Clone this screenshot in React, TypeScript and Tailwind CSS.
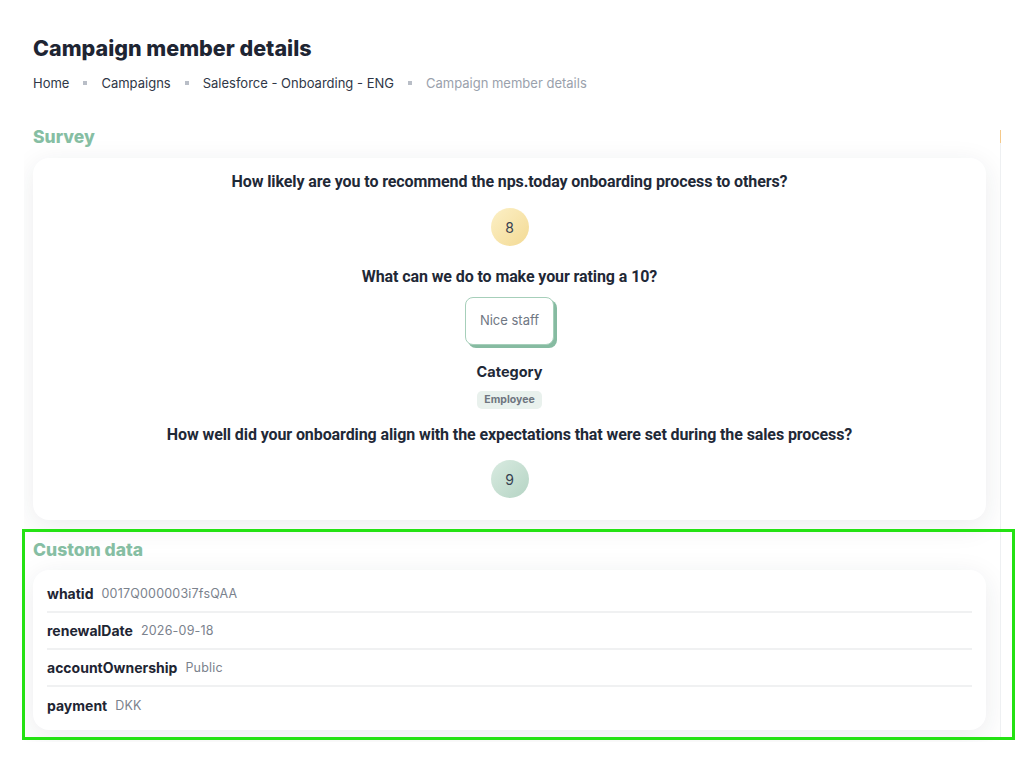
import React from 'react';

const customData = [
  { key: 'whatid', value: '0017Q000003i7fsQAA' },
  { key: 'renewalDate', value: '2026-09-18' },
  { key: 'accountOwnership', value: 'Public' },
  { key: 'payment', value: 'DKK' },
];

const crumbs = ['Home', 'Campaigns', 'Salesforce - Onboarding - ENG'];

const Question: React.FC<{ children: React.ReactNode; className?: string }> = ({ children, className }) => (
  <h3
    className={`text-[16px] leading-[22px] font-bold text-[#1f2937] tracking-[-0.1px] ${className ?? ''}`}
    style={{ fontFamily: 'Roboto, sans-serif' }}
  >
    {children}
  </h3>
);

const App: React.FC = () => {
  return (
    <div className="relative min-h-[762px] bg-white" style={{ fontFamily: 'Inter, "Open Sans", sans-serif' }}>
      {/* Page header */}
      <div className="pl-[33px] pt-[34px]">
        <h1 className="text-[21.5px] leading-[28px] font-extrabold text-[#1e2533]">Campaign member details</h1>
        <nav className="mt-[11px] flex items-center text-[13px] leading-[20px] text-[#2f3747]">
          {crumbs.map((c) => (
            <React.Fragment key={c}>
              <span>{c}</span>
              <span className="mx-[14px] h-[4px] w-[4px] bg-[#b9bec7]" />
            </React.Fragment>
          ))}
          <span className="text-[#9aa1ac]">Campaign member details</span>
        </nav>
      </div>

      {/* Content panel */}
      <div className="relative mt-[32px] ml-[24px] w-[976px] overflow-hidden px-[9px] pb-[12px]">
        <h2 className="text-[17.5px] leading-[24px] font-extrabold text-[#86bea3]">Survey</h2>
        <div className="mt-[9px] w-[953px] rounded-[16px] bg-white pt-[13px] pb-[22px] shadow-[0_6px_28px_rgba(30,40,60,0.09)] flex flex-col items-center text-center">
          <Question>How likely are you to recommend the nps.today onboarding process to others?</Question>
          <div className="mt-[15px] flex h-[38px] w-[38px] items-center justify-center rounded-full bg-gradient-to-br from-[#fcf0c6] to-[#f3da94] text-[14px] text-[#374151]">
            8
          </div>
          <Question className="mt-[20px]">What can we do to make your rating a 10?</Question>
          <div className="mt-[9px] flex h-[48px] w-[89px] items-center justify-center rounded-[8px] border border-[#a6cfba] bg-white text-[13px] text-[#707783] shadow-[3px_3px_0_#86bba1]">
            Nice staff
          </div>
          <h3 className="mt-[16px] text-[14.5px] leading-[22px] font-bold text-[#1f2937]">Category</h3>
          <span className="mt-[8px] rounded-[5px] bg-[#e9f1ed] px-[7px] text-[10.5px] leading-[18px] font-bold text-[#6f7680]">
            Employee
          </span>
          <Question className="mt-[15px]">
            How well did your onboarding align with the expectations that were set during the sales process?
          </Question>
          <div className="mt-[14px] flex h-[38px] w-[38px] items-center justify-center rounded-full bg-gradient-to-br from-[#d9ebe1] to-[#b5d4c4] text-[14px] text-[#374151]">
            9
          </div>
        </div>

        <h2 className="mt-[18px] text-[17.5px] leading-[24px] font-extrabold text-[#86bea3]">Custom data</h2>
        <div className="mt-[8px] w-[953px] rounded-[16px] bg-white px-[14px] py-[6px] shadow-[0_6px_28px_rgba(30,40,60,0.09)]">
          {customData.map((row, i) => (
            <div
              key={row.key}
              className={`flex h-[37px] items-center gap-[8px] ${i < customData.length - 1 ? 'border-b-2 border-[#f0f1f2]' : ''}`}
            >
              <span className="text-[14px] leading-[20px] font-bold text-[#1e2533]">{row.key}</span>
              <span className="text-[12.5px] leading-[20px] tracking-[0.2px] text-[#7b828d] pt-[1px]">{row.value}</span>
            </div>
          ))}
        </div>
      </div>

      {/* thin edge of the neighbouring panel */}
      <div className="absolute left-[1000px] top-[130px] h-[13px] w-[1px] bg-[#f5c98a]" />
      <div className="absolute left-[1000px] top-[143px] h-[595px] w-[1px] bg-[#eef0f2]" />

      {/* highlight box */}
      <div className="pointer-events-none absolute left-[22px] top-[529px] h-[211px] w-[993px] border-[3px] border-[#24e213]" />
    </div>
  );
};

export default App;
